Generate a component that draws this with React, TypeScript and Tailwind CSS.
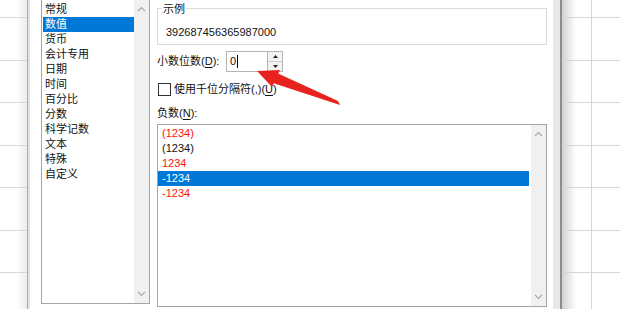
import React from "react"

const categories = ["常规", "数值", "货币", "会计专用", "日期", "时间", "百分比", "分数", "科学记数", "文本", "特殊", "自定义"]

const negatives = [
  { label: "(1234)", red: true },
  { label: "(1234)", red: false },
  { label: "1234", red: true },
  { label: "-1234", red: false, selected: true },
  { label: "-1234", red: true },
]

const rowHeights = ["h-[18px]", "h-[43px]", "h-[42px]", "h-[43px]", "h-[42px]", "h-[43px]", "h-[42px]"]

function SheetRows() {
  return (
    <div className="flex flex-col">
      {rowHeights.map((h, i) => (
        <div key={i} className={`${h} border-b border-[#d6d6d6]`} />
      ))}
    </div>
  )
}

function Chevron({ up }: { up?: boolean }) {
  return (
    <svg width="9" height="6" viewBox="0 0 9 6" className="block">
      <polyline
        points={up ? "1,5 4.5,1.5 8,5" : "1,1 4.5,4.5 8,1"}
        fill="none"
        stroke="#a8a8a8"
        strokeWidth="1.2"
      />
    </svg>
  )
}

function ScrollBar() {
  return (
    <div className="w-[15px] bg-[#f0f0f0] flex flex-col justify-between items-center py-[6px]">
      <Chevron up />
      <Chevron />
    </div>
  )
}

function U({ children }: { children: React.ReactNode }) {
  return <span className="underline underline-offset-2">{children}</span>
}

export default function App() {
  return (
    <div className="relative w-[620px] h-[309px] overflow-hidden bg-white text-[11px] leading-[15px] text-[#111] font-['Liberation_Sans','Noto_Sans_CJK_SC',sans-serif] flex">
      {/* spreadsheet strip, left */}
      <div className="w-[28px] border-r border-[#a9a9a9] bg-[linear-gradient(to_right,#ffffff_60%,#ececec)]">
        <SheetRows />
      </div>
      <div className="w-[2px] bg-[#e4e4e4]" />

      {/* dialog body */}
      <div className="flex pl-[11px] gap-[7px]">
        {/* category list */}
        <div className="w-[109px] h-[304px] border-x border-b border-[#a5a5a5] flex">
          <div className="flex-1 pt-[2px] pl-[1px]">
            {categories.map((c) => (
              <div
                key={c}
                className={`h-[15px] pl-[2px] ${c === "数值" ? "bg-[#0078d7] text-white" : ""}`}
              >
                {c}
              </div>
            ))}
          </div>
          <ScrollBar />
        </div>

        {/* right panel */}
        <div className="w-[390px] flex flex-col">
          <fieldset className="h-[45px] border border-[#dcdcdc] pl-[8px]">
            <legend className="-ml-[4px] px-[1px] pt-[2px] leading-[14px]">示例</legend>
            <div className="pt-[9px]">392687456365987000</div>
          </fieldset>

          <div className="mt-[6px] h-[21px] flex items-center">
            <span className="w-[69px]">
              小数位数(<U>D</U>):
            </span>
            <div className="w-[42px] h-[21px] border border-[#b4b4b4] flex items-center pl-[3px]">
              <span>0</span>
              <span className="w-px h-[13px] bg-black ml-[1px]" />
            </div>
            <div className="w-[15px] h-[21px] border border-l-0 border-[#b4b4b4] flex flex-col">
              <div className="flex-1 bg-[#f3f3f3] border-b border-[#cfcfcf] flex items-center justify-center">
                <svg width="5" height="3" viewBox="0 0 5 3">
                  <polygon points="0,3 2.5,0 5,3" fill="#222" />
                </svg>
              </div>
              <div className="flex-1 bg-[#f3f3f3] flex items-center justify-center">
                <svg width="5" height="3" viewBox="0 0 5 3">
                  <polygon points="0,0 2.5,3 5,0" fill="#222" />
                </svg>
              </div>
            </div>
          </div>

          <div className="mt-[10px] h-[14px] flex items-center">
            <div className="ml-[1px] w-[13px] h-[13px] border border-[#333] bg-white" />
            <span className="ml-[3px]">
              使用千位分隔符(,)(<U>U</U>)
            </span>
          </div>

          <div className="mt-[9px] leading-[16px]">
            负数(<U>N</U>):
          </div>

          <div className="mt-[3px] h-[183px] border border-[#a5a5a5] flex">
            <div className="flex-1 pt-[1px] pr-[2px]">
              {negatives.map((n, i) => (
                <div
                  key={i}
                  className={`h-[15px] pl-[4px] ${
                    n.selected ? "bg-[#0078d7] text-white" : n.red ? "text-[#ff1010]" : ""
                  }`}
                >
                  {n.label}
                </div>
              ))}
            </div>
            <ScrollBar />
          </div>
        </div>
      </div>

      {/* dialog right edge */}
      <div className="w-[6px]" />
      <div className="w-[7px] bg-[#e8e8e8]" />
      <div className="w-[2px] bg-[#8c8c8c]" />

      {/* spreadsheet, right */}
      <div className="flex-1 flex bg-[linear-gradient(to_right,#d2d2d2,#ffffff_14px)]">
        <div className="w-[30px] border-r border-[#d6d6d6]">
          <SheetRows />
        </div>
        <div className="flex-1">
          <SheetRows />
        </div>
      </div>

      {/* red annotation arrow */}
      <svg className="absolute inset-0 pointer-events-none" width="620" height="309" viewBox="0 0 620 309">
        <polygon points="338,101 340,105 273,83 277,73" fill="#e8231f" />
        <polygon points="257,71 280,70 272,87" fill="#e8231f" />
      </svg>
    </div>
  )
}
